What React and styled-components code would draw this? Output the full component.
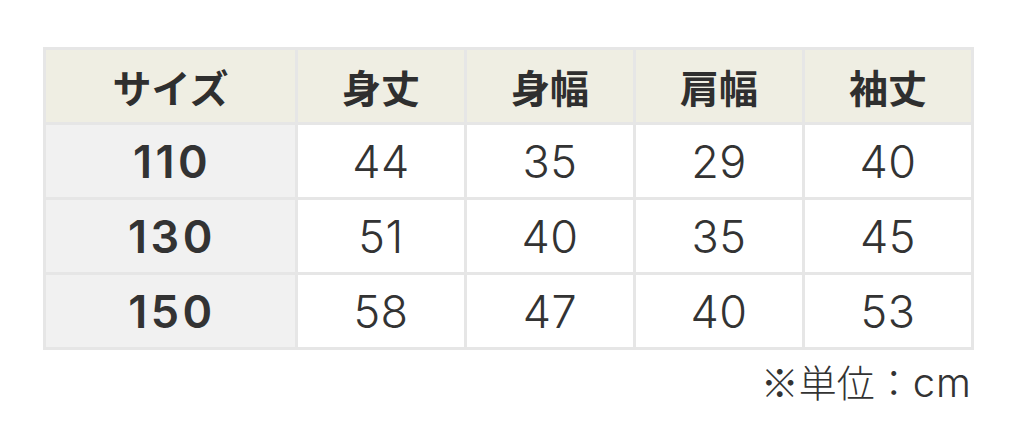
import React from "react";
import styled, { createGlobalStyle } from "styled-components";

const Global = createGlobalStyle`
  html, body { margin: 0; padding: 0; background: #fff; }
  body { font-family: Inter, "Noto Sans CJK JP", sans-serif; color: #333; }
`;

const Page = styled.div`
  width: 1024px;
  height: 432px;
  padding: 47px 0 0 43px;
  box-sizing: border-box;
`;

const Wrap = styled.div`
  width: 931px;
  display: flex;
  flex-direction: column;
`;

const Table = styled.div`
  display: grid;
  grid-template-columns: 249px repeat(4, 166px);
  grid-auto-rows: 72px;
  gap: 3px;
  padding: 3px;
  background: #e6e6e6;
`;

const Cell = styled.div`
  display: flex;
  align-items: center;
  justify-content: center;
  color: #333;
`;

const HeadCell = styled(Cell)`
  background: #efeee3;
  font-family: "Noto Sans CJK JP", sans-serif;
  font-size: 39px;
  font-weight: 700;
  color: #2f2f2f;
`;

const SizeCell = styled(Cell)`
  background: #f1f1f1;
  font-family: Inter, "Liberation Sans", sans-serif;
  font-size: 45px;
  font-weight: 600;
  letter-spacing: 3.5px;
  padding-left: 3px;
`;

const ValueCell = styled(Cell)`
  background: #ffffff;
  font-family: Inter, "Liberation Sans", sans-serif;
  font-size: 45px;
  font-weight: 300;
  letter-spacing: 0.5px;
`;

const Note = styled.div`
  margin-top: 8px;
  text-align: right;
  padding-right: 2px;
  font-family: "Noto Sans CJK JP", sans-serif;
  font-size: 38px;
  font-weight: 300;
  line-height: 46px;
  color: #333;
`;

const NoteLatin = styled.span`
  font-family: Inter, sans-serif;
  font-size: 40px;
  font-weight: 300;
  letter-spacing: 1px;
`;

const headers = ["サイズ", "身丈", "身幅", "肩幅", "袖丈"];
const rows = [
  ["110", "44", "35", "29", "40"],
  ["130", "51", "40", "35", "45"],
  ["150", "58", "47", "40", "53"],
];

export default function App() {
  return (
    <>
      <Global />
      <Page>
        <Wrap>
          <Table>
            {headers.map((h) => (
              <HeadCell key={h}>{h}</HeadCell>
            ))}
            {rows.map((r) => (
              <React.Fragment key={r[0]}>
                <SizeCell>{r[0]}</SizeCell>
                {r.slice(1).map((v, i) => (
                  <ValueCell key={i}>{v}</ValueCell>
                ))}
              </React.Fragment>
            ))}
          </Table>
          <Note>※単位：<NoteLatin>cm</NoteLatin></Note>
        </Wrap>
      </Page>
    </>
  );
}
